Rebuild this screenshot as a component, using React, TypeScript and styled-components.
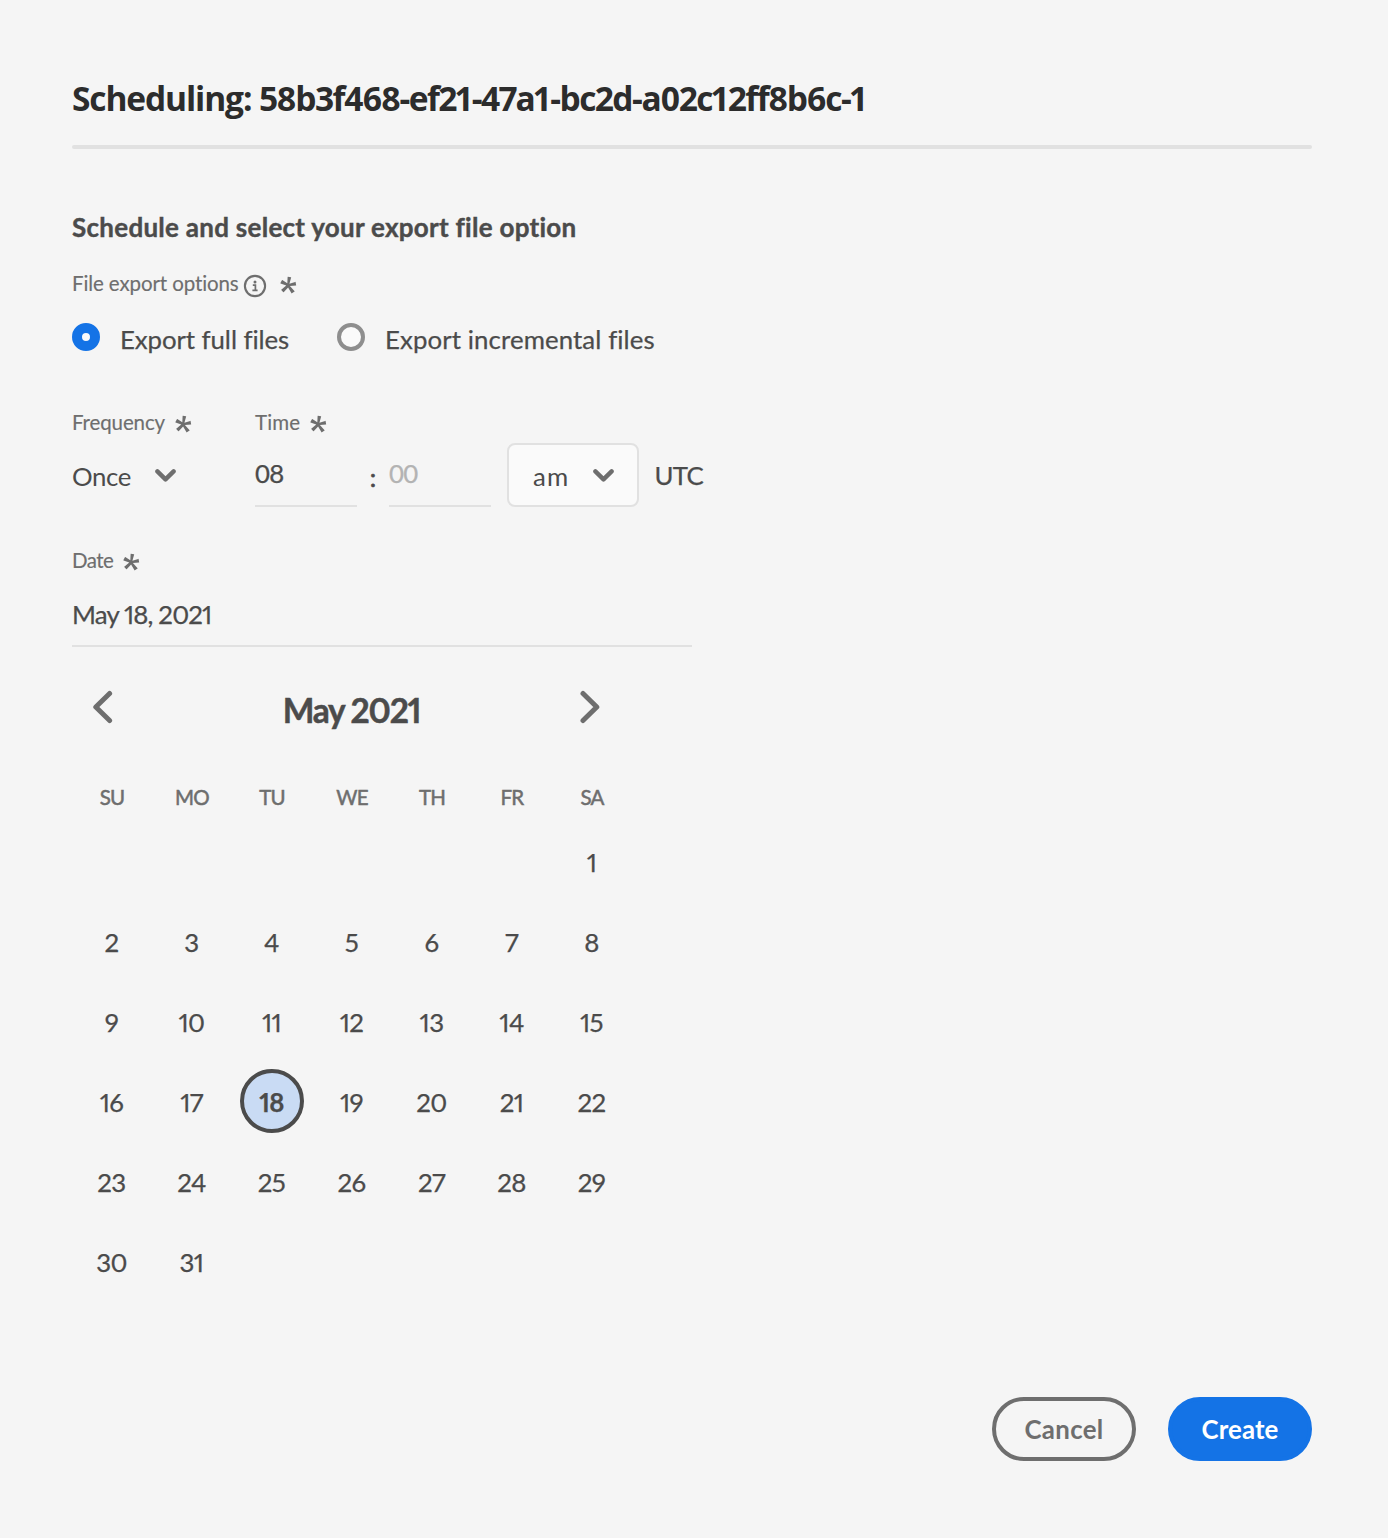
import React from 'react';
import styled, { createGlobalStyle, css } from 'styled-components';

const GlobalStyle = createGlobalStyle`
  * { box-sizing: border-box; }
  body {
    margin: 0;
    background: #f5f5f5;
    color: #4b4b4b;
    font-family: Lato, 'Open Sans', sans-serif;
    font-variant-numeric: proportional-nums;
    font-variant-ligatures: none;
  }
`;

const bodyText = css`
  font-size: 25.8px;
  line-height: 36px;
  white-space: nowrap;
  -webkit-text-stroke: 0.25px currentColor;
`;

const Dialog = styled.main`
  display: flex;
  flex-direction: column;
  width: 1388px;
  height: 1538px;
  padding: 76px 76px 77px 72px;
`;

const Title = styled.h1`
  margin: 0;
  font-family: 'Open Sans', 'Noto Sans', sans-serif;
  font-size: 33.5px;
  line-height: 44px;
  font-weight: 700;
  letter-spacing: -1.12px;
  white-space: nowrap;
  color: #2c2c2c;
`;

const Identifier = styled.span`
  letter-spacing: -1.45px;
`;

const Divider = styled.hr`
  width: 100%;
  height: 4px;
  margin: 25px 0 60px;
  border: 0;
  border-radius: 2px;
  background: #e1e1e1;
  flex: none;
`;

const Heading = styled.h2`
  margin: 0 0 24px;
  font-size: 26px;
  line-height: 36px;
  font-weight: 700;
  letter-spacing: 0.27px;
  -webkit-text-stroke: 0.4px currentColor;
`;

const Label = styled.div`
  display: flex;
  align-items: center;
  height: 28px;
  color: #6e6e6e;
`;

const LabelText = styled.span<{ $track: number }>`
  font-size: 20.5px;
  line-height: 28px;
  white-space: nowrap;
  letter-spacing: ${(p) => p.$track}px;
  -webkit-text-stroke: 0.15px currentColor;
`;

const InfoSvg = styled.svg`
  width: 24px;
  height: 24px;
  margin: 5px 0 0 4px;
  fill: none;
  stroke: currentColor;
`;

const StarSvg = styled.svg<{ $gap: number }>`
  width: 19px;
  height: 18.5px;
  margin: 4px 0 0 ${(p) => p.$gap}px;
  fill: currentColor;
`;

const RadioGroup = styled.div`
  display: flex;
  height: 36px;
  margin-top: 24px;
`;

const Radio = styled.label<{ $width: number }>`
  display: flex;
  gap: 20px;
  width: ${(p) => p.$width}px;
`;

const RadioDot = styled.span<{ $checked?: boolean }>`
  flex: none;
  width: 28px;
  height: 28px;
  margin-top: 2px;
  border-radius: 50%;
  background: #fafafa;
  border: ${(p) => (p.$checked ? '10px solid #1473e6' : '4px solid #8e8e8e')};
`;

const RadioText = styled.span<{ $track: number }>`
  ${bodyText}
  letter-spacing: ${(p) => p.$track}px;
`;

const TimeRow = styled.div`
  display: flex;
  margin-top: 51px;
`;

const Field = styled.div<{ $width?: number }>`
  display: flex;
  flex-direction: column;
  flex: none;
  width: ${(p) => (p.$width ? `${p.$width}px` : 'auto')};
`;

const Controls = styled.div`
  display: flex;
  height: 64px;
  margin-top: 7px;
`;

const QuietPicker = styled.div`
  display: flex;
  width: 103.5px;
  justify-content: space-between;
  padding-top: 15px;
`;

const PickerText = styled.span<{ $track: number }>`
  ${bodyText}
  -webkit-text-stroke: 0;
  letter-spacing: ${(p) => p.$track}px;
`;

const Picker = styled.div`
  display: flex;
  justify-content: space-between;
  width: 132px;
  height: 64px;
  margin-left: 16px;
  padding: 13px 23.5px 0 24px;
  border: 2px solid #e1e1e1;
  border-radius: 8px;
  background: #fafafa;
`;

const ChevronSvg = styled.svg`
  width: 21px;
  height: 13px;
  margin-top: 10.5px;
  fill: none;
  stroke: #6e6e6e;
  stroke-width: 4.4;
  stroke-linecap: round;
  stroke-linejoin: round;
`;

const TimeInput = styled.div<{ $placeholder?: boolean }>`
  ${bodyText}
  width: 102px;
  height: 64px;
  padding-top: 12px;
  border-bottom: 2px solid #e1e1e1;
  color: ${(p) => (p.$placeholder ? '#b3b3b3' : '#4b4b4b')};
  font-variant-numeric: tabular-nums;
  letter-spacing: -0.6px;
`;

const Colon = styled.span`
  ${bodyText}
  width: 32px;
  padding-top: 16px;
  text-align: center;
  -webkit-text-stroke: 0.6px currentColor;
`;

const Zone = styled.span`
  ${bodyText}
  margin-left: 15.5px;
  padding-top: 14px;
  letter-spacing: -0.7px;
`;

const DateField = styled.div`
  display: flex;
  flex-direction: column;
  width: 620px;
  margin-top: 39px;
`;

const DateInput = styled.div`
  ${bodyText}
  height: 51px;
  margin-top: 22px;
  border-bottom: 2px solid #e1e1e1;
  letter-spacing: -0.85px;
`;

const Calendar = styled.section`
  width: 560px;
  margin-top: 41px;
`;

const CalendarHeader = styled.header`
  display: flex;
  justify-content: space-between;
  height: 44px;
  padding: 0 31.5px 0 19.5px;
`;

const Month = styled.h3`
  margin: 0 0 0 11px;
  font-size: 33.5px;
  line-height: 44px;
  font-weight: 700;
  letter-spacing: -1.2px;
  -webkit-text-stroke: 0.5px currentColor;
`;

const ArrowSvg = styled.svg`
  width: 21px;
  height: 34px;
  margin-top: 2px;
  fill: none;
  stroke: #6e6e6e;
  stroke-width: 5;
  stroke-linecap: round;
  stroke-linejoin: round;
`;

const WeekRow = styled.div`
  display: grid;
  grid-template-columns: repeat(7, 80px);
  margin: 51px 0 10px;
`;

const Weekday = styled.span`
  font-size: 20.5px;
  line-height: 28px;
  font-weight: 400;
  letter-spacing: -0.8px;
  text-align: center;
  color: #6e6e6e;
  -webkit-text-stroke: 0.5px currentColor;
`;

const Days = styled.div`
  display: grid;
  grid-template-columns: repeat(7, 80px);
  grid-auto-rows: 80px;
  place-items: center;
`;

const Day = styled.span<{ $selected: boolean; $column: number }>`
  display: flex;
  align-items: center;
  justify-content: center;
  width: 64px;
  height: 64px;
  padding: 2px 1px 0 0;
  grid-column: ${(p) => p.$column};
  font-size: 25.8px;
  letter-spacing: -0.6px;
  -webkit-text-stroke: 0.25px currentColor;
  ${(p) =>
    p.$selected &&
    css`
      border: 4px solid #4b4b4b;
      border-radius: 50%;
      background: #c9dbf4;
      font-weight: 700;
    `}
`;

const Footer = styled.footer`
  display: flex;
  justify-content: flex-end;
  gap: 32px;
  margin-top: auto;
`;

const Button = styled.button<{ $primary?: boolean; $track: number }>`
  width: 144px;
  height: 64px;
  padding: 0 0 1px;
  border: 4px solid ${(p) => (p.$primary ? '#1473e6' : '#6e6e6e')};
  border-radius: 32px;
  background: ${(p) => (p.$primary ? '#1473e6' : 'transparent')};
  color: ${(p) => (p.$primary ? '#ffffff' : '#6e6e6e')};
  font: 700 25.8px Lato, 'Open Sans', sans-serif;
  letter-spacing: ${(p) => p.$track}px;
`;

const Required = ({ gap }: { gap: number }) => (
  <StarSvg $gap={gap} viewBox="0 0 8 8" preserveAspectRatio="none" aria-hidden>
    <path d="M6.575 6.555c.055.056.092.13 0 .2l-1.149.741c-.092.056-.129.019-.166-.074L3.834 4.94 1.963 7c-.019.036-.074.073-.129 0l-.889-.927c-.093-.055-.074-.111 0-.166l2.111-1.76L.648 3.24c-.037 0-.092-.074-.056-.167l.63-1.259a.097.097 0 0 1 .167-.036L3.5 3.148l.13-2.7a.1.1 0 0 1 .111-.111l1.277.185c.093 0 .111.037.093.13l-.723 2.647 2.445-.741c.055-.037.111-.037.148.074l.241 1.37c.018.093 0 .13-.074.13l-2.556.2z" />
  </StarSvg>
);

const Info = () => (
  <InfoSvg viewBox="0 0 24 24" aria-hidden>
    <circle cx="12" cy="12" r="10.1" strokeWidth="2.1" />
    <circle cx="12" cy="8.1" r="1.5" fill="currentColor" stroke="none" />
    <path d="M9.8 11.2h2.6v5M9.4 16.3h5.2" strokeWidth="1.7" />
  </InfoSvg>
);

const Chevron = () => (
  <ChevronSvg viewBox="0 0 21 13" aria-hidden>
    <path d="M2.4 2.4l8.1 8 8.1-8" />
  </ChevronSvg>
);

const weekdays = ['SU', 'MO', 'TU', 'WE', 'TH', 'FR', 'SA'];
const days = Array.from({ length: 31 }, (_, i) => i + 1);
const firstColumn = 7;
const selectedDay = 18;

export default function App() {
  return (
    <>
      <GlobalStyle />
      <Dialog>
        <Title>
          Scheduling: <Identifier>58b3f468-ef21-47a1-bc2d-a02c12ff8b6c-1</Identifier>
        </Title>
        <Divider />
        <Heading>Schedule and select your export file option</Heading>
        <Label>
          <LabelText $track={-0.11}>File export options</LabelText>
          <Info />
          <Required gap={12} />
        </Label>
        <RadioGroup>
          <Radio $width={265}>
            <RadioDot $checked />
            <RadioText $track={-0.07}>Export full files</RadioText>
          </Radio>
          <Radio $width={330}>
            <RadioDot />
            <RadioText $track={0.1}>Export incremental files</RadioText>
          </Radio>
        </RadioGroup>

        <TimeRow>
          <Field $width={183}>
            <Label>
              <LabelText $track={-0.12}>Frequency</LabelText>
              <Required gap={8.5} />
            </Label>
            <Controls>
              <QuietPicker>
                <PickerText $track={-0.4}>Once</PickerText>
                <Chevron />
              </QuietPicker>
            </Controls>
          </Field>
          <Field>
            <Label>
              <LabelText $track={0.1}>Time</LabelText>
              <Required gap={8.5} />
            </Label>
            <Controls>
              <TimeInput>08</TimeInput>
              <Colon>:</Colon>
              <TimeInput $placeholder>00</TimeInput>
              <Picker>
                <PickerText $track={1.3}>am</PickerText>
                <Chevron />
              </Picker>
              <Zone>UTC</Zone>
            </Controls>
          </Field>
        </TimeRow>

        <DateField>
          <Label>
            <LabelText $track={-0.6}>Date</LabelText>
            <Required gap={8.5} />
          </Label>
          <DateInput>May 18, 2021</DateInput>
        </DateField>

        <Calendar>
          <CalendarHeader>
            <ArrowSvg viewBox="0 0 21 34" aria-hidden>
              <path d="M17.6 3.5L3.8 17l13.8 13.5" />
            </ArrowSvg>
            <Month>May 2021</Month>
            <ArrowSvg viewBox="0 0 21 34" aria-hidden>
              <path d="M3 3.5L16.8 17 3 30.5" />
            </ArrowSvg>
          </CalendarHeader>
          <WeekRow>
            {weekdays.map((name) => (
              <Weekday key={name}>{name}</Weekday>
            ))}
          </WeekRow>
          <Days>
            {days.map((day) => (
              <Day
                key={day}
                $selected={day === selectedDay}
                $column={((day + firstColumn - 2) % 7) + 1}
              >
                {day}
              </Day>
            ))}
          </Days>
        </Calendar>

        <Footer>
          <Button $track={0.35}>Cancel</Button>
          <Button $primary $track={0.1}>
            Create
          </Button>
        </Footer>
      </Dialog>
    </>
  );
}
